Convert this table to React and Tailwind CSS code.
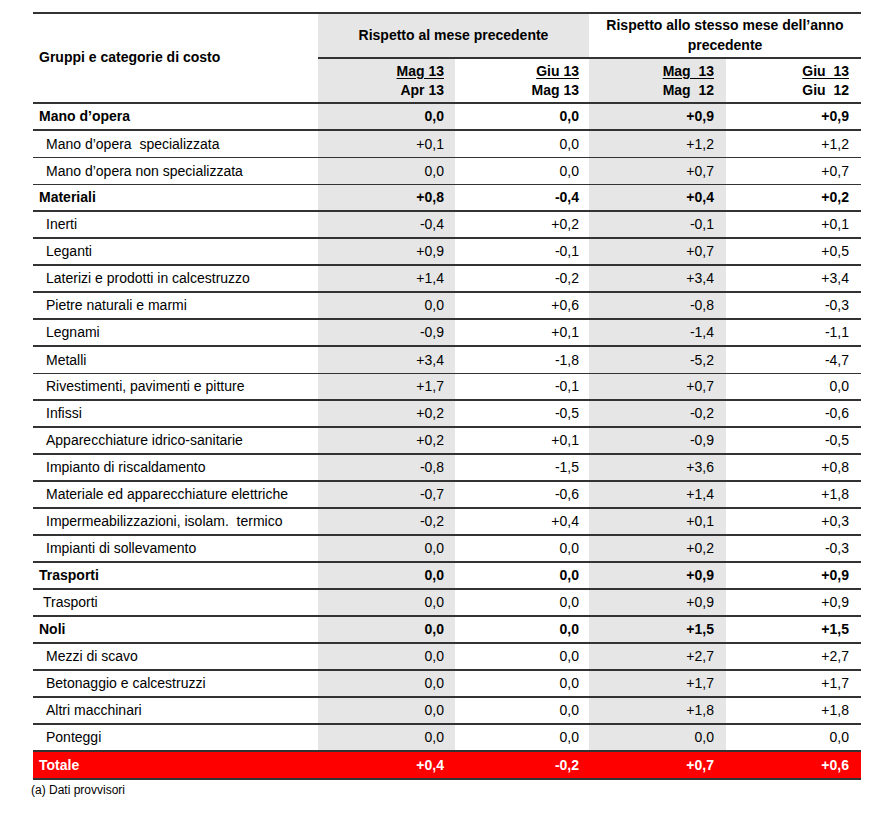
import React from "react";

const rows = [
  { label: "Mano d’opera", v: ["0,0", "0,0", "+0,9", "+0,9"], bold: true, thick: true },
  { label: "Mano d’opera  specializzata", v: ["+0,1", "0,0", "+1,2", "+1,2"] },
  { label: "Mano d’opera non specializzata", v: ["0,0", "0,0", "+0,7", "+0,7"] },
  { label: "Materiali", v: ["+0,8", "-0,4", "+0,4", "+0,2"], bold: true, thick: true },
  { label: "Inerti", v: ["-0,4", "+0,2", "-0,1", "+0,1"], thick: true },
  { label: "Leganti", v: ["+0,9", "-0,1", "+0,7", "+0,5"], thick: true },
  { label: "Laterizi e prodotti in calcestruzzo", v: ["+1,4", "-0,2", "+3,4", "+3,4"], thick: true },
  { label: "Pietre naturali e marmi", v: ["0,0", "+0,6", "-0,8", "-0,3"], thick: true },
  { label: "Legnami", v: ["-0,9", "+0,1", "-1,4", "-1,1"], thick: true },
  { label: "Metalli", v: ["+3,4", "-1,8", "-5,2", "-4,7"] },
  { label: "Rivestimenti, pavimenti e pitture", v: ["+1,7", "-0,1", "+0,7", "0,0"], thick: true },
  { label: "Infissi", v: ["+0,2", "-0,5", "-0,2", "-0,6"], thick: true },
  { label: "Apparecchiature idrico-sanitarie", v: ["+0,2", "+0,1", "-0,9", "-0,5"], thick: true },
  { label: "Impianto di riscaldamento", v: ["-0,8", "-1,5", "+3,6", "+0,8"], thick: true },
  { label: "Materiale ed apparecchiature elettriche", v: ["-0,7", "-0,6", "+1,4", "+1,8"], thick: true },
  { label: "Impermeabilizzazioni, isolam.  termico", v: ["-0,2", "+0,4", "+0,1", "+0,3"], thick: true },
  { label: "Impianti di sollevamento", v: ["0,0", "0,0", "+0,2", "-0,3"], thick: true },
  { label: "Trasporti", v: ["0,0", "0,0", "+0,9", "+0,9"], bold: true, thick: true },
  { label: "Trasporti", v: ["0,0", "0,0", "+0,9", "+0,9"], thick: true, tight: true },
  { label: "Noli", v: ["0,0", "0,0", "+1,5", "+1,5"], bold: true, thick: true },
  { label: "Mezzi di scavo", v: ["0,0", "0,0", "+2,7", "+2,7"], thick: true },
  { label: "Betonaggio e calcestruzzi", v: ["0,0", "0,0", "+1,7", "+1,7"], thick: true },
  { label: "Altri macchinari", v: ["0,0", "0,0", "+1,8", "+1,8"], thick: true },
  { label: "Ponteggi", v: ["0,0", "0,0", "0,0", "0,0"], thick: true },
];

const grid = "grid grid-cols-[285px_137px_134px_137px_135px]";

function Row({ r }) {
  return (
    <div
      className={`${grid} h-[27px] border-[#333] ${r.thick ? "border-b-2" : "border-b"} ${
        r.bold ? "font-bold" : ""
      }`}
    >
      <div className={`flex items-center ${r.bold ? "pl-[6px]" : r.tight ? "pl-[10px]" : "pl-[13px]"} whitespace-pre`}>
        {r.label}
      </div>
      {r.v.map((x, i) => (
        <div
          key={i}
          className={`flex items-center justify-end ${i % 2 === 0 ? "bg-[#e6e6e6] pr-[11px]" : "pr-[10px]"} ${
            i >= 2 ? "pr-[12px]" : ""
          }`}
        >
          {x}
        </div>
      ))}
    </div>
  );
}

function SubHead({ top, bottom, gray, pr }) {
  return (
    <div className={`flex flex-col items-end justify-center font-bold whitespace-pre leading-[19px] ${gray ? "bg-[#e6e6e6]" : ""} ${pr}`}>
      <span className="underline underline-offset-2">{top}</span>
      <span>{bottom}</span>
    </div>
  );
}

export default function App() {
  return (
    <div className="bg-white w-[882px] h-[821px] pt-[12px] pl-[33px] text-[14px] text-black font-['Liberation_Sans',Arial,sans-serif]">
      <div className="w-[828px]">
        <div className="border-t-2 border-b-2 border-[#333] flex">
          <div className="w-[285px] flex items-center pl-[6px] font-bold pb-[2px]">Gruppi e categorie di costo</div>
          <div className="w-[543px] flex flex-col">
            <div className="flex h-[45px] border-b-2 border-[#333] font-bold">
              <div className="w-[271px] bg-[#e6e6e6] flex items-center justify-center">Rispetto al mese precedente</div>
              <div className="w-[272px] flex flex-col items-center justify-center leading-[20px] pb-[2px]">
                <span>Rispetto allo stesso mese dell’anno</span>
                <span>precedente</span>
              </div>
            </div>
            <div className="grid grid-cols-[137px_134px_137px_135px] h-[43px]">
              <SubHead top="Mag 13" bottom="Apr 13" gray pr="pr-[11px]" />
              <SubHead top="Giu 13" bottom="Mag 13" pr="pr-[10px]" />
              <SubHead top="Mag  13" bottom="Mag  12" gray pr="pr-[12px]" />
              <SubHead top="Giu  13" bottom="Giu  12" pr="pr-[12px]" />
            </div>
          </div>
        </div>
        {rows.map((r, i) => (
          <Row key={i} r={r} />
        ))}
        <div className={`${grid} h-[28px] bg-[#ff0000] text-white font-bold border-b-2 border-[#333]`}>
          <div className="flex items-center pl-[6px]">Totale</div>
          <div className="flex items-center justify-end pr-[11px]">+0,4</div>
          <div className="flex items-center justify-end pr-[10px]">-0,2</div>
          <div className="flex items-center justify-end pr-[12px]">+0,7</div>
          <div className="flex items-center justify-end pr-[12px]">+0,6</div>
        </div>
      </div>
      <div className="text-[12px] -ml-[2px] mt-[1px]">(a) Dati provvisori</div>
    </div>
  );
}
